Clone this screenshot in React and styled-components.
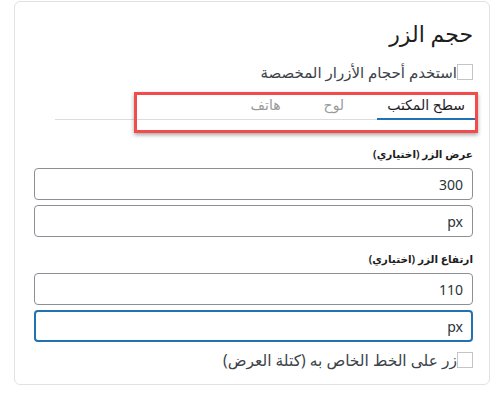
import React from "react";
import styled, { createGlobalStyle } from "styled-components";

const Global = createGlobalStyle`
	body {
		margin: 0;
		background: #fff;
		font-family: "Noto Sans", "DejaVu Sans", sans-serif;
		color: #1e1e1e;
	}
`;

const Card = styled.div`
	position: relative;
	direction: rtl;
	box-sizing: border-box;
	margin: 1px 0 0 14px;
	width: 476px;
	height: 384px;
	border: 1px solid #e2e2e2;
	border-radius: 6px;
	padding: 12px 16px 0 19px;
`;

const Title = styled.h2`
	margin: 0;
	font-size: 22px;
	font-weight: 400;
	line-height: 38px;
	color: #1e1e1e;
`;

const CheckRow = styled.label`
	display: flex;
	align-items: center;
	margin-top: ${(p) => p.$top || 0}px;
	font-size: ${(p) => p.$size || 15}px;
	color: #3c434a;
	line-height: 20px;
`;

const Box = styled.span`
	display: inline-block;
	width: 14px;
	height: 14px;
	border: 1px solid #c3c4c7;
	background: #fff;
	flex: none;
`;

const Tabs = styled.div`
	display: flex;
	gap: 23px;
	margin: 8px -2px 0 0;
	width: 420px;
	border-bottom: 1px solid #dcdcde;
`;

const Tab = styled.div`
	padding: 6px 10px 4px;
	font-size: 14px;
	line-height: 18px;
	color: ${(p) => (p.$active ? "#1e1e1e" : "#9a9a9a")};
	border-bottom: 2px solid ${(p) => (p.$active ? "#2271b1" : "transparent")};
	margin-bottom: -1px;
`;

const Highlight = styled.div`
	position: absolute;
	left: 119px;
	top: 90px;
	width: 344px;
	height: 41px;
	box-sizing: border-box;
	border: 3px solid #f24b4b;
	box-shadow: 0 2px 4px rgba(0, 0, 0, 0.35);
	pointer-events: none;
`;

const Field = styled.div`
	margin-top: ${(p) => p.$top}px;
`;

const Label = styled.div`
	font-size: 10.5px;
	font-weight: 700;
	color: #1e1e1e;
	line-height: 16px;
	margin-bottom: 6px;
`;

const Input = styled.div`
	box-sizing: border-box;
	height: 32px;
	margin-bottom: 5px;
	border: ${(p) => (p.$focus ? "2px solid #2271b1" : "1px solid #8c8f94")};
	border-radius: 4px;
	display: flex;
	align-items: center;
	padding: 0 ${(p) => (p.$focus ? 8 : 9)}px;
	font-size: 14px;
	color: #2c3338;
`;

export default function App() {
	return (
		<>
			<Global />
			<Card>
				<Title>حجم الزر</Title>
				<CheckRow $top={10}>
					<Box />
					استخدم أحجام الأزرار المخصصة
				</CheckRow>
				<Tabs>
					<Tab $active>سطح المكتب</Tab>
					<Tab>لوح</Tab>
					<Tab>هاتف</Tab>
				</Tabs>
				<Highlight />
				<Field $top={26}>
					<Label>عرض الزر (اختياري)</Label>
					<Input>300</Input>
					<Input>px</Input>
				</Field>
				<Field $top={14}>
					<Label>ارتفاع الزر (اختياري)</Label>
					<Input>110</Input>
					<Input $focus>px</Input>
				</Field>
				<CheckRow $top={8} $size={15.5}>
					<Box />
					زر على الخط الخاص به (كتلة العرض)
				</CheckRow>
			</Card>
		</>
	);
}
